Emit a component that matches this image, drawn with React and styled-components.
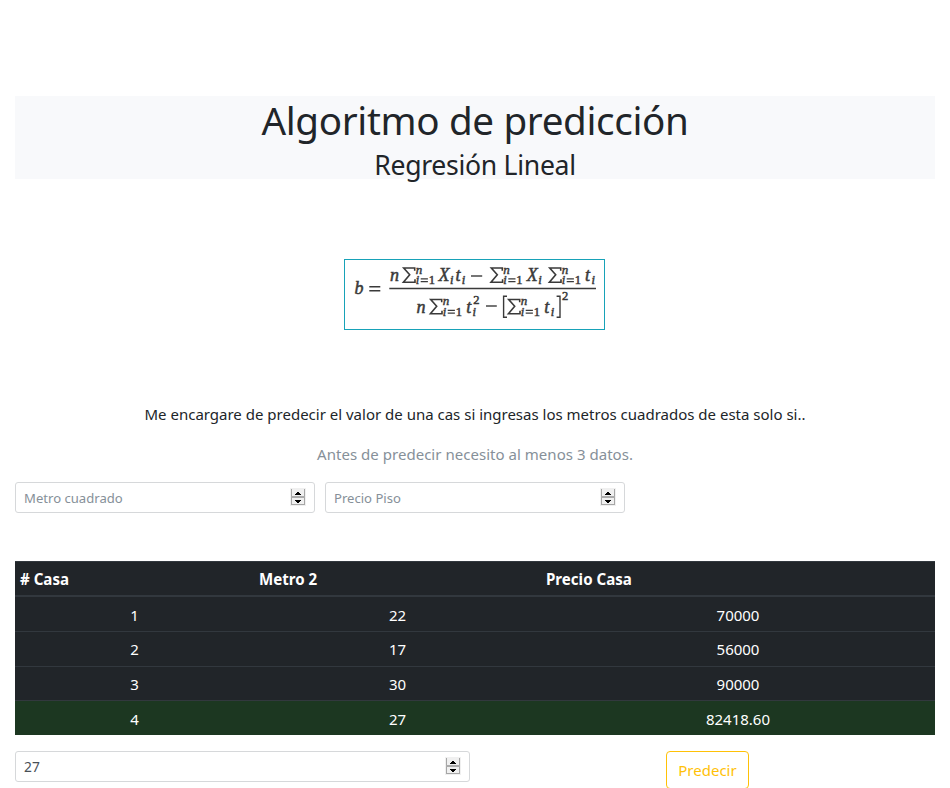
import React from "react";
import styled, { createGlobalStyle } from "styled-components";

const GlobalStyle = createGlobalStyle`
  *, *::before, *::after { box-sizing: border-box; }
  html, body { height: 100%; overflow: hidden; }
  body {
    margin: 0;
    background: #fff;
    color: #212529;
    font-family: "Segoe UI", "Noto Sans", sans-serif;
    font-size: 15px;
    line-height: 24px;
  }
`;

const Page = styled.main`
  display: flex;
  flex-direction: column;
  height: 788px;
  padding: 96px 15px 0;
  overflow: hidden;
`;

const Banner = styled.header`
  flex: none;
  height: 83px;
  background: #f8f9fb;
  text-align: center;
`;

const Title = styled.h1`
  margin: 0;
  font-size: 38.6px;
  font-weight: 400;
  line-height: 48px;
  letter-spacing: -0.34px;
`;

const Subtitle = styled.h3`
  margin: 0;
  padding-top: 4px;
  font-size: 26.6px;
  font-weight: 400;
  line-height: 34px;
  letter-spacing: -0.3px;
`;

const FormulaBox = styled.figure`
  flex: none;
  align-self: center;
  width: 261px;
  height: 71px;
  margin: 80px 1px 0 0;
  border: 1px solid #17a2b8;

  svg { display: block; }
`;

const Lead = styled.p`
  margin: ${(p) => p.$top}px 0 0;
  text-align: center;
  color: ${(p) => (p.$muted ? "#869099" : "#212529")};
  letter-spacing: ${(p) => (p.$muted ? 0.03 : 0)}px;
`;

const Fields = styled.div`
  display: flex;
  flex: none;
  gap: 10px;
  margin-top: 16px;
`;

const Field = styled.label`
  display: flex;
  align-items: center;
  width: ${(p) => p.$width}px;
  height: 31px;
  padding: 0 8px;
  border: 1px solid #d6d8da;
  border-radius: 3px;
  background: #fff;

  svg { margin-bottom: 2px; }
`;

const Input = styled.input`
  flex: 1;
  min-width: 0;
  padding: 0;
  border: 0;
  outline: 0;
  background: transparent;
  color: #495057;
  font: inherit;
  font-size: ${(p) => p.$size}px;

  &::placeholder { color: #869099; opacity: 1; }
`;

const Table = styled.table`
  flex: none;
  width: 920px;
  margin-top: 48px;
  border-spacing: 0;
  table-layout: fixed;
  background: #212529;
  color: #fff;
`;

const HeadCell = styled.th`
  width: ${(p) => p.$width}px;
  height: 36px;
  padding: 0 5px;
  border-top: 1px solid #32383e;
  border-bottom: 2px solid #32383e;
  font-weight: 700;
  font-size: 15.1px;
  line-height: 24px;
  text-align: left;
`;

const Row = styled.tr`
  background: ${(p) => (p.$predicted ? "#1c3721" : "transparent")};
`;

const Cell = styled.td`
  height: ${(p) => p.$height}px;
  padding: ${(p) => p.$nudge}px 0 0;
  border-top: ${(p) => (p.$first ? "0" : "1px solid #32383e")};
  text-align: center;
`;

const Actions = styled.div`
  display: flex;
  flex: none;
  align-items: flex-start;
  gap: 196px;
  margin-top: 16px;
`;

const PredictButton = styled.button`
  width: 83px;
  height: 38px;
  padding: 0;
  border: 1px solid #ffc107;
  border-radius: 4px;
  background: transparent;
  color: #ffc107;
  font: inherit;
`;

function Stepper() {
  return (
    <svg width="16" height="18" viewBox="0 0 16 18" shapeRendering="crispEdges" aria-hidden="true">
      <rect width="16" height="18" fill="#f0f0f0" />
      <path d="M1 1h1v16H1zM14 1h1v16h-1zM1 16h14v1H1z" fill="#a6a6a6" />
      <path d="M1 8h14v2H1z" fill="#ababab" />
      <path d="M7 4h2v1h1v1H6V5h1zM5 6h6v1H5zM5 12h6v1H5zM6 13h4v1H9v1H7v-1H6z" fill="#000" />
    </svg>
  );
}

function NumberField({ width, size = 13.1, ...rest }) {
  return (
    <Field $width={width}>
      <Input $size={size} {...rest} />
      <Stepper />
    </Field>
  );
}

const MathText = styled.text`
  font-family: "Liberation Serif", serif;
  font-style: ${(p) => (p.$upright ? "normal" : "italic")};
  font-size: ${(p) => p.$size}px;
  fill: #3a3a3a;
  stroke: #3a3a3a;
  stroke-width: 0.5px;
`;

function Sum({ x, y }) {
  return (
    <g>
      <path
        d={`M${x + 12} ${y - 10.2}v-2.8H${x + 1}l6 6.8-6.3 7.5H${x + 12.3}v-3`}
        fill="none"
        stroke="#3a3a3a"
        strokeWidth="1.6"
      />
      <MathText $size={13} x={x + 13} y={y - 7.3} textLength="7.5">n</MathText>
      <MathText $size={12.5} x={x + 13} y={y + 3}>i</MathText>
      <path d={`M${x + 18} ${y - 2.2}h7.2M${x + 18} ${y + 0.7}h7.2`} stroke="#3a3a3a" strokeWidth="1.2" />
      <MathText $size={12.5} $upright x={x + 26} y={y + 3}>1</MathText>
    </g>
  );
}

function Term({ x, y, subX, children }) {
  return (
    <g>
      <MathText $size={18} x={x} y={y}>{children}</MathText>
      <MathText $size={12.5} x={subX} y={y + 3}>i</MathText>
    </g>
  );
}

function SlopeFormula() {
  return (
    <svg width="259" height="69" viewBox="0 0 259 69" aria-hidden="true">
      <MathText $size={18} x="9.5" y="34">b</MathText>
      <path d="M24.3 26.8h11M24.3 30.8h11" stroke="#3a3a3a" strokeWidth="1.4" />
      <path d="M44.3 28.6H251" stroke="#3a3a3a" strokeWidth="1.5" />

      <MathText $size={18} x="45" y="21">n</MathText>
      <Sum x={57.7} y={21} />
      <Term x={93.5} y={21} subX={105}>X</Term>
      <Term x={110.5} y={21} subX={116.7}>t</Term>
      <path d="M126 16h11.2" stroke="#3a3a3a" strokeWidth="1.4" />
      <Sum x={145.3} y={21} />
      <Term x={181.7} y={21} subX={193.2}>X</Term>
      <Sum x={203.7} y={21} />
      <Term x={240} y={21} subX={246.6}>t</Term>

      <MathText $size={18} x="71.5" y="52.5">n</MathText>
      <Sum x={84.7} y={52.5} />
      <Term x={121.3} y={52.5} subX={127.5}>t</Term>
      <MathText $size={12.5} $upright x="128.3" y="43.5">2</MathText>
      <path d="M141 46h10.8" stroke="#3a3a3a" strokeWidth="1.4" />
      <path d="M162 36.3h-3.4v21h3.4M211.6 36.3h3.4v21h-3.4" fill="none" stroke="#3a3a3a" strokeWidth="1.4" />
      <Sum x={162.7} y={52.5} />
      <Term x={199.3} y={52.5} subX={205.8}>t</Term>
      <MathText $size={12.5} $upright x="217" y="40.2">2</MathText>
    </svg>
  );
}

const COLUMNS = [
  { label: "# Casa", width: 239 },
  { label: "Metro 2", width: 287 },
  { label: "Precio Casa", width: 394 },
];

const ROWS = [
  { id: 1, metros: "22", precio: "70000", height: 34, nudge: 2 },
  { id: 2, metros: "17", precio: "56000", height: 35, nudge: 0 },
  { id: 3, metros: "30", precio: "90000", height: 34, nudge: 0 },
  { id: 4, metros: "27", precio: "82418.60", height: 35, nudge: 2, predicted: true },
];

export default function App() {
  return (
    <>
      <GlobalStyle />
      <Page>
        <Banner>
          <Title>Algoritmo de predicción</Title>
          <Subtitle>Regresión Lineal</Subtitle>
        </Banner>
        <FormulaBox>
          <SlopeFormula />
        </FormulaBox>
        <Lead $top={72}>
          Me encargare de predecir el valor de una cas si ingresas los metros cuadrados de esta solo si..
        </Lead>
        <Lead $top={16} $muted>Antes de predecir necesito al menos 3 datos.</Lead>
        <Fields>
          <NumberField width={300} placeholder="Metro cuadrado" />
          <NumberField width={300} placeholder="Precio Piso" />
        </Fields>
        <Table>
          <thead>
            <tr>
              {COLUMNS.map((c) => (
                <HeadCell key={c.label} $width={c.width}>{c.label}</HeadCell>
              ))}
            </tr>
          </thead>
          <tbody>
            {ROWS.map((r, i) => (
              <Row key={r.id} $predicted={r.predicted}>
                {[r.id, r.metros, r.precio].map((value, col) => (
                  <Cell key={col} $height={r.height} $nudge={r.nudge} $first={i === 0}>{value}</Cell>
                ))}
              </Row>
            ))}
          </tbody>
        </Table>
        <Actions>
          <NumberField width={455} size={13.8} defaultValue="27" />
          <PredictButton type="button">Predecir</PredictButton>
        </Actions>
      </Page>
    </>
  );
}
